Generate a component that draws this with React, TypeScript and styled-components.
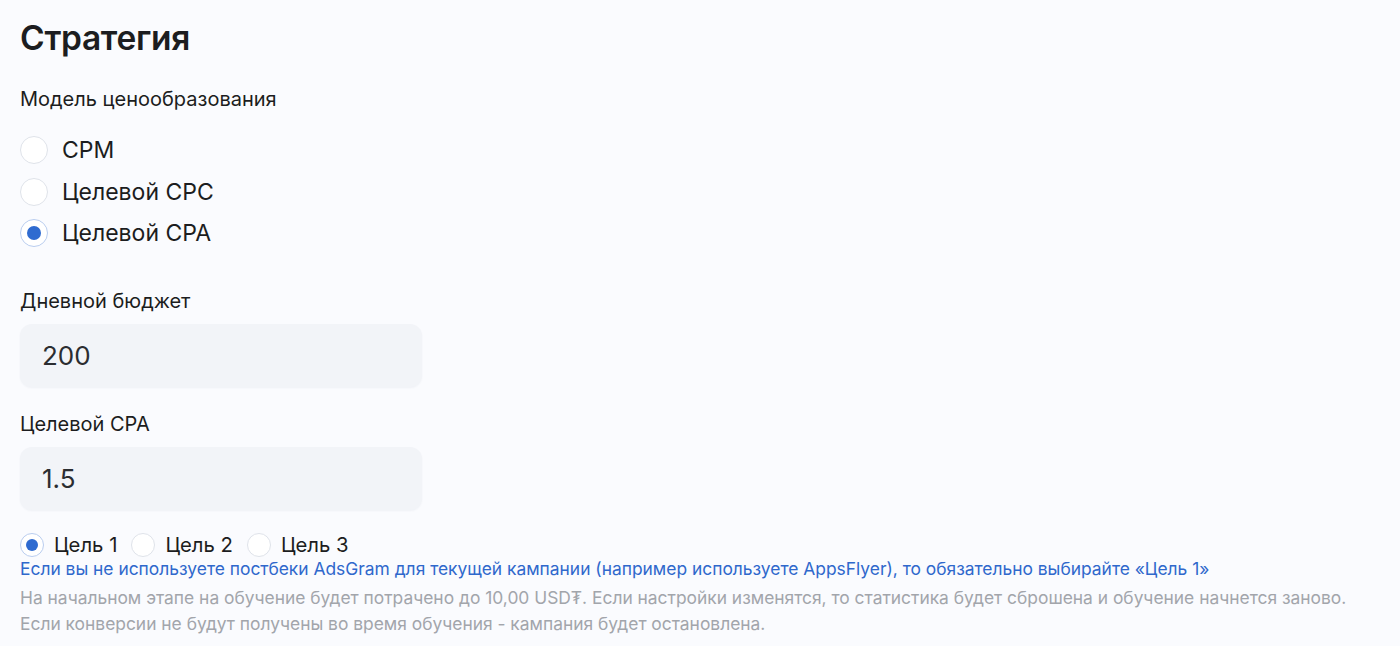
import React, { useState } from 'react';
import styled, { createGlobalStyle } from 'styled-components';

const GlobalStyle = createGlobalStyle`
  html, body {
    margin: 0;
    padding: 0;
    background: #fafbfe;
  }
  body {
    font-family: Inter, "Noto Sans", "Liberation Sans", sans-serif;
    color: #1c1d20;
  }
`;

const pricingModels = ['CPM', 'Целевой CPC', 'Целевой CPA'];
const goals = ['Цель 1', 'Цель 2', 'Цель 3'];

export default function App() {
  const [model, setModel] = useState('Целевой CPA');
  const [goal, setGoal] = useState('Цель 1');
  const [budget, setBudget] = useState('200');
  const [cpa, setCpa] = useState('1.5');

  return (
    <Page>
      <GlobalStyle />
      <Title>Стратегия</Title>

      <SectionLabel>Модель ценообразования</SectionLabel>
      <RadioList>
        {pricingModels.map((m) => (
          <RadioRow key={m} onClick={() => setModel(m)}>
            <RadioCircle $checked={model === m} $size={28} />
            <RadioText>{m}</RadioText>
          </RadioRow>
        ))}
      </RadioList>

      <Field>
        <FieldLabel>Дневной бюджет</FieldLabel>
        <Input value={budget} onChange={(e) => setBudget(e.target.value)} />
      </Field>

      <Field $tight>
        <FieldLabel>Целевой CPA</FieldLabel>
        <Input value={cpa} onChange={(e) => setCpa(e.target.value)} />
      </Field>

      <GoalRow>
        {goals.map((g) => (
          <GoalOption key={g} onClick={() => setGoal(g)}>
            <RadioCircle $checked={goal === g} $size={24} />
            <GoalText>{g}</GoalText>
          </GoalOption>
        ))}
      </GoalRow>
      <Notice>
        Если вы не используете постбеки AdsGram для текущей кампании (например используете AppsFlyer), то обязательно выбирайте «Цель 1»
      </Notice>
      <Hint>
        На начальном этапе на обучение будет потрачено до 10,00 USD₮. Если настройки изменятся, то статистика будет сброшена и обучение начнется заново.
        <br />
        Если конверсии не будут получены во время обучения - кампания будет остановлена.
      </Hint>
    </Page>
  );
}

const Page = styled.div`
  padding: 16px 20px 0;
`;

const Title = styled.h1`
  margin: 0;
  font-size: 33.5px;
  line-height: 44px;
  font-weight: 600;
  letter-spacing: -0.3px;
  color: #1c1d20;
`;

const SectionLabel = styled.div`
  margin-top: 26px;
  font-size: 20px;
  line-height: 26px;
  font-weight: 400;
`;

const RadioList = styled.div`
  display: flex;
  flex-direction: column;
  gap: 13.5px;
  margin-top: 24px;
`;

const RadioRow = styled.label`
  display: flex;
  align-items: center;
  gap: 14px;
  cursor: pointer;
`;

const RadioCircle = styled.span<{ $checked: boolean; $size: number }>`
  width: ${(p) => p.$size}px;
  height: ${(p) => p.$size}px;
  box-sizing: border-box;
  border-radius: 50%;
  border: 1px solid ${(p) => (p.$checked ? '#b9cdef' : '#dfe3ea')};
  background: #ffffff;
  display: flex;
  align-items: center;
  justify-content: center;
  flex-shrink: 0;

  &::after {
    content: '';
    display: ${(p) => (p.$checked ? 'block' : 'none')};
    width: ${(p) => Math.round(p.$size * 0.5)}px;
    height: ${(p) => Math.round(p.$size * 0.5)}px;
    border-radius: 50%;
    background: #2f6bd0;
  }
`;

const RadioText = styled.span`
  font-size: 23px;
  line-height: 28px;
  color: #1c1d20;
`;

const Field = styled.div<{ $tight?: boolean }>`
  margin-top: ${(p) => (p.$tight ? '24px' : '41px')};
  display: flex;
  flex-direction: column;
  gap: 10px;
`;

const FieldLabel = styled.div`
  font-size: 20px;
  line-height: 26px;
  font-weight: 400;
`;

const Input = styled.input`
  width: 402px;
  height: 63px;
  box-sizing: border-box;
  border: none;
  outline: none;
  border-radius: 12px;
  background: #f2f4f8;
  box-shadow: 0 1px 2px rgba(30, 50, 90, 0.05);
  padding: 0 22px;
  font-family: inherit;
  font-size: 26px;
  color: #2b2d31;
`;

const GoalRow = styled.div`
  display: flex;
  align-items: center;
  gap: 14px;
  margin-top: 23px;
`;

const GoalOption = styled.label`
  display: flex;
  align-items: center;
  gap: 10px;
  cursor: pointer;
`;

const GoalText = styled.span`
  font-size: 20.3px;
  line-height: 24px;
  color: #1c1d20;
`;

const Notice = styled.div`
  margin-top: 1px;
  font-size: 17.4px;
  line-height: 22px;
  color: #2f68cc;
`;

const Hint = styled.div`
  margin-top: 5px;
  font-size: 17.4px;
  line-height: 26px;
  color: #a2a5ab;
`;
